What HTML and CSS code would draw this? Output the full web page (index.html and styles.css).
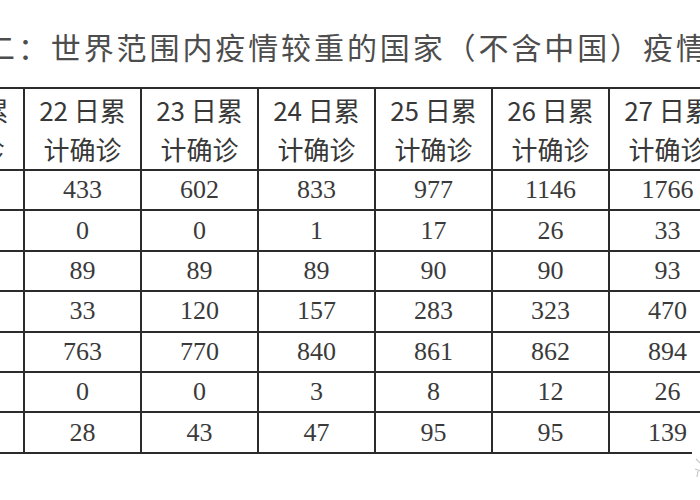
FILE: index.html
```html
<!DOCTYPE html>
<html lang="zh-CN">
<head>
<meta charset="utf-8">
<title>世界范围内疫情较重的国家</title>
<link rel="stylesheet" href="styles.css">
</head>
<body>
<div class="page">
  <h1 class="title">二：世界范围内疫情较重的国家（不含中国）疫情统计</h1>
  <table class="grid">
    <colgroup>
      <col class="c"><col class="c"><col class="c"><col class="c"><col class="c"><col class="c"><col class="c">
    </colgroup>
    <thead>
      <tr>
        <th>21 日累<br>计确诊</th>
        <th>22 日累<br>计确诊</th>
        <th>23 日累<br>计确诊</th>
        <th>24 日累<br>计确诊</th>
        <th>25 日累<br>计确诊</th>
        <th>26 日累<br>计确诊</th>
        <th>27 日累<br>计确诊</th>
      </tr>
    </thead>
    <tbody>
      <tr><td></td><td>433</td><td>602</td><td>833</td><td>977</td><td>1146</td><td>1766</td></tr>
      <tr><td></td><td>0</td><td>0</td><td>1</td><td>17</td><td>26</td><td>33</td></tr>
      <tr><td></td><td>89</td><td>89</td><td>89</td><td>90</td><td>90</td><td>93</td></tr>
      <tr><td></td><td>33</td><td>120</td><td>157</td><td>283</td><td>323</td><td>470</td></tr>
      <tr><td></td><td>763</td><td>770</td><td>840</td><td>861</td><td>862</td><td>894</td></tr>
      <tr><td></td><td>0</td><td>0</td><td>3</td><td>8</td><td>12</td><td>26</td></tr>
      <tr><td></td><td>28</td><td>43</td><td>47</td><td>95</td><td>95</td><td>139</td></tr>
    </tbody>
  </table>
  <svg class="mark" width="12" height="60" viewBox="0 0 12 60">
    <rect x="0" y="0" width="12" height="60" fill="#fff"/>
    <path d="M4 14 L8 18 M3 24 L9 26 M6 26 L5 32" stroke="#c8c8c8" stroke-width="1.2" fill="none"/>
  </svg>
</div>
</body>
</html>
```
FILE: styles.css
```css
html, body {
  margin: 0;
  padding: 0;
  background: #fff;
}

.page {
  position: relative;
  width: 700px;
  height: 500px;
  overflow: hidden;
}

.title {
  margin: 0 0 0 -15px;
  padding-top: 26px;
  font: 400 30px/40px "Noto Sans CJK SC", sans-serif;
  letter-spacing: 2.9px;
  color: #4d4d4d;
  white-space: nowrap;
}

.grid {
  margin-top: 21px;
  margin-left: -94px;
  border-collapse: collapse;
  table-layout: fixed;
  width: 819px;
}

.grid .c {
  width: 117px;
}

.grid th,
.grid td {
  border: 2px solid #2b2b2b;
  padding: 0;
  text-align: center;
  vertical-align: middle;
}

.grid th {
  height: 80px;
  font: 400 26px/39px "Noto Sans CJK SC", sans-serif;
  color: #383838;
}

.grid td {
  height: 38.4px;
  font: 400 26px/1 "Liberation Serif", serif;
  color: #3a3a3a;
}

.mark {
  position: absolute;
  left: 692px;
  top: 445px;
}
```
